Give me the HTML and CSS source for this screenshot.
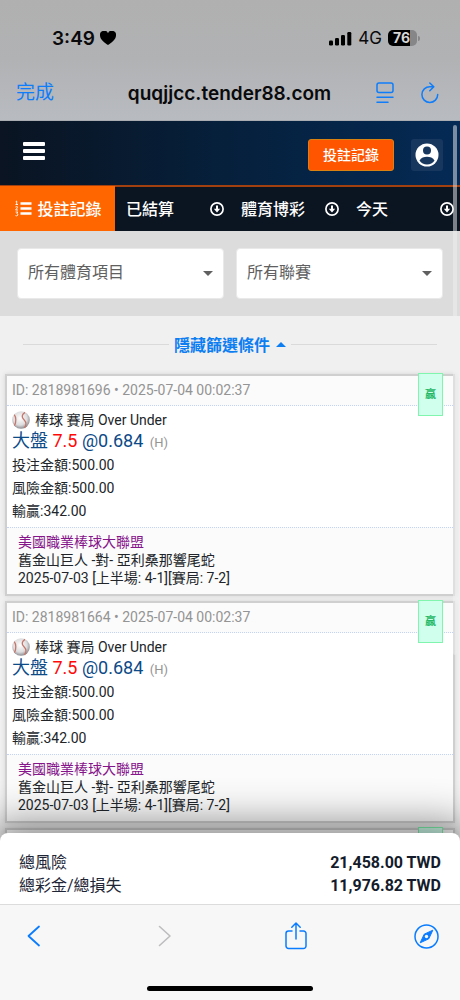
FILE: index.html
```html
<!DOCTYPE html>
<html lang="zh-Hant">
<head>
<meta charset="utf-8">
<meta name="viewport" content="width=device-width, initial-scale=1">
<title>投註記錄</title>
<link rel="stylesheet" href="styles.css">
</head>
<body>
<svg class="defs" aria-hidden="true">
  <defs>
    <radialGradient id="ball-fill" cx="45%" cy="40%" r="60%">
      <stop offset="0" stop-color="#fff"/><stop offset=".65" stop-color="#dcdcde"/><stop offset="1" stop-color="#8d8b90"/>
    </radialGradient>
    <symbol id="ball" viewBox="0 0 18 18">
      <circle cx="9" cy="9" r="8.8" fill="url(#ball-fill)"/>
      <path d="M2.2 3.6C4.2 6 4.4 11 2.4 14.6M13 1.4C9.600 3.500 9.300 6.500 12.200 9C14.600 11.300 14.400 14 12.600 16.800" fill="none" stroke="#c4766a" stroke-width="1.300"/>
    </symbol>
    <symbol id="down" viewBox="0 0 14 14">
      <circle cx="7" cy="7" r="6.100" fill="none" stroke="#fff" stroke-width="1.700"/>
      <path d="M6 3.500h2v3.300h2.200L7 10.400 3.800 6.800H6z" fill="#fff"/>
    </symbol>
  </defs>
</svg>

<header class="chrome">
  <div class="status">
    <div class="clock">3:49
      <svg width="16" height="14" viewBox="0 0 16 14"><path d="M8 14C5 12 0 8.600 0 4.500A4.200 4.200 0 0 1 8 2.200 4.200 4.200 0 0 1 16 4.500C16 8.600 11 12 8 14z"/></svg>
    </div>
    <div class="signals">
      <svg width="23" height="15" viewBox="0 0 23 15"><rect x="0" y="9.500" width="4" height="5" rx="1.200"/><rect x="6" y="7" width="4" height="7.500" rx="1.200"/><rect x="12" y="4" width="4" height="10.500" rx="1.200"/><rect x="18.300" y="1" width="4" height="13.500" rx="1.200"/></svg>
      <span class="net">4G</span>
      <span class="battery"><span class="level">76</span></span>
    </div>
  </div>
  <div class="address">
    <button class="done" type="button">完成</button>
    <span class="host">quqjjcc.tender88.com</span>
    <div class="tools">
      <button type="button" aria-label="閱讀器"><svg width="18" height="22" viewBox="0 0 18 22" fill="none" stroke="#0f7dfa" stroke-width="1.500" stroke-linecap="round"><rect x="1" y="1" width="16" height="9.500" rx="2"/><path d="M1 15.200h16M1 20.200h11"/></svg></button>
      <button type="button" aria-label="重新載入"><svg width="18" height="22" viewBox="0 0 18 22" fill="none" stroke="#0f7dfa" stroke-width="1.500" stroke-linecap="round" stroke-linejoin="round"><path d="M16.700 12.500A7.900 7.900 0 1 1 9 4.700h3.500M8.800 1l4 3.800-4 4"/></svg></button>
    </div>
  </div>
</header>

<div class="site">
  <div class="topbar">
    <button class="menu" type="button" aria-label="選單"><svg width="22" height="18" viewBox="0 0 22 18" fill="#fff"><rect width="22" height="4" rx="1"/><rect y="7" width="22" height="4" rx="1"/><rect y="14" width="22" height="4" rx="1"/></svg></button>
    <div class="account">
      <a class="records" href="#records">投註記錄</a>
      <button class="user" type="button" aria-label="帳戶"><svg width="24" height="24" viewBox="0 0 24 24"><circle cx="12" cy="12" r="11.500" fill="#fff"/><circle cx="12" cy="7.500" r="4" fill="#17375f"/><path d="M4.500 17.500C6 14.800 9 13.800 12 13.800s6 1 7.500 3.700C18 20 15 21.500 12 21.500S6 20 4.500 17.500z" fill="#17375f"/></svg></button>
    </div>
  </div>
  <nav class="tabs">
    <button class="tab active" type="button">
      <svg width="17" height="17" viewBox="0 0 17 17" fill="none" stroke="#fff"><path d="M5.500 3.500h11M5.500 8.500h11M5.500 13.500h11" stroke-width="2.400"/><path d="M.7 1.700l1-.7v3.500M.5 4.500h2.500M.5 7q2.500-1 2 .6L.6 10H3M.6 12h2.200l-1 1.500q2 .6.700 2-.8.700-2 .1" stroke-width=".9"/></svg>
      <span>投註記錄</span>
    </button>
    <button class="tab" type="button"><span>已結算</span><svg width="14" height="14"><use href="#down"/></svg></button>
    <button class="tab" type="button"><span>體育博彩</span><svg width="14" height="14"><use href="#down"/></svg></button>
    <button class="tab" type="button"><span>今天</span><svg width="14" height="14"><use href="#down"/></svg></button>
  </nav>
  <main class="content">
    <form class="filters">
      <label class="field"><select aria-label="體育項目"><option>所有體育項目</option></select></label>
      <label class="field"><select aria-label="聯賽"><option>所有聯賽</option></select></label>
    </form>
    <div class="toggle"><button type="button">隱藏篩選條件<i class="up"></i></button></div>
    <div class="bets" id="records">
      <article class="bet">
        <div class="id">ID: 2818981696 • 2025-07-04 00:02:37</div>
        <div class="detail">
          <div class="market"><svg width="18" height="18"><use href="#ball"/></svg>棒球 賽局 Over Under</div>
          <div class="pick">大盤 <b>7.5</b> @0.684 <small>(H)</small></div>
          <div class="amount">投注金額:500.00</div>
          <div class="amount">風險金額:500.00</div>
          <div class="amount">輸贏:342.00</div>
        </div>
        <div class="match">
          <div class="league">美國職業棒球大聯盟</div>
          <div>舊金山巨人 -對- 亞利桑那響尾蛇</div>
          <div>2025-07-03 [上半場: 4-1][賽局: 7-2]</div>
        </div>
        <span class="result">贏</span>
      </article>
      <article class="bet">
        <div class="id">ID: 2818981664 • 2025-07-04 00:02:37</div>
        <div class="detail">
          <div class="market"><svg width="18" height="18"><use href="#ball"/></svg>棒球 賽局 Over Under</div>
          <div class="pick">大盤 <b>7.5</b> @0.684 <small>(H)</small></div>
          <div class="amount">投注金額:500.00</div>
          <div class="amount">風險金額:500.00</div>
          <div class="amount">輸贏:342.00</div>
        </div>
        <div class="match">
          <div class="league">美國職業棒球大聯盟</div>
          <div>舊金山巨人 -對- 亞利桑那響尾蛇</div>
          <div>2025-07-03 [上半場: 4-1][賽局: 7-2]</div>
        </div>
        <span class="result">贏</span>
      </article>
      <article class="bet">
        <div class="id"></div>
        <span class="result"></span>
      </article>
    </div>
  </main>
  <span class="scrollbar"></span>
</div>

<section class="summary">
  <div class="total"><span>總風險</span><strong>21,458.00 TWD</strong></div>
  <div class="total"><span>總彩金/總損失</span><strong>11,976.82 TWD</strong></div>
</section>

<footer class="toolbar">
  <div class="actions">
    <button type="button" aria-label="上一頁"><svg width="14" height="22" viewBox="0 0 14 22" fill="none" stroke="#0a7cff" stroke-width="1.800" stroke-linecap="round" stroke-linejoin="round"><path d="M12 1.500L1.500 11 12 20.500"/></svg></button>
    <button type="button" aria-label="下一頁"><svg width="14" height="22" viewBox="0 0 14 22" fill="none" stroke="#bdbdbf" stroke-width="1.600" stroke-linecap="round" stroke-linejoin="round"><path d="M1.500 1.500L12 11 1.500 20.500"/></svg></button>
    <button type="button" aria-label="分享"><svg width="22" height="28" viewBox="0 0 22 28" fill="none" stroke="#0a7cff" stroke-width="1.500" stroke-linecap="round" stroke-linejoin="round"><path d="M7 9H3.500A2.500 2.500 0 0 0 1 11.500v12.500A2.500 2.500 0 0 0 3.500 26.500h15A2.500 2.500 0 0 0 21 24V11.500A2.500 2.500 0 0 0 18.500 9H15M11 17V1.200M6.800 5.200L11 1l4.200 4.200"/></svg></button>
    <button type="button" aria-label="瀏覽器"><svg width="25" height="25" viewBox="0 0 25 25"><circle cx="12.500" cy="12.500" r="11.500" fill="none" stroke="#0a7cff" stroke-width="1.500"/><path d="M18.800 6.200L14.800 14.800 6.200 18.800 10.200 10.200z" fill="#0a7cff" stroke="#0a7cff" stroke-linejoin="round"/><circle cx="12.500" cy="12.500" r="1.700" fill="#f7f7f7"/></svg></button>
  </div>
  <div class="home"></div>
</footer>
</body>
</html>
```
FILE: styles.css
```css
* { box-sizing: border-box; }

body {
  margin: 0;
  height: 100vh;
  display: flex;
  flex-direction: column;
  overflow: hidden;
  background: #f0f0f0;
  color: #212529;
  font-family: Roboto, "Noto Sans CJK TC", sans-serif;
  font-size: 14px;
}

button, select {
  font: inherit;
  color: inherit;
  background: none;
  border: 0;
  margin: 0;
  padding: 0;
}

svg { display: block; flex: none; }
.defs { position: absolute; width: 0; height: 0; }

.chrome {
  flex: none;
  padding-top: 24px;
  background: linear-gradient(#b0b0b0, #b1b2b4 50%, #b8bbc0);
  border-bottom: 1px solid #a9adb2;
  color: #0a0a0c;
  font-family: Inter, "Noto Sans CJK TC", sans-serif;
}
.status {
  display: flex;
  align-items: center;
  justify-content: space-between;
  height: 28px;
  padding: 0 43px 0 52px;
}
.clock {
  display: flex;
  align-items: center;
  gap: 5px;
  font-size: 19px;
  font-weight: 600;
}
.signals { display: flex; align-items: center; gap: 6px; }
.net { font-size: 17px; }
.battery {
  position: relative;
  width: 29px;
  height: 16px;
  border-radius: 5px;
  background: linear-gradient(90deg, #000 76%, #868688 76%);
}
.battery::after {
  content: "";
  position: absolute;
  left: 30px;
  top: 6px;
  width: 2px;
  height: 5px;
  border-radius: 0 2px 2px 0;
  background: #868688;
}
.level {
  display: block;
  padding-right: 2px;
  text-align: center;
  color: #d6d6d6;
  font-size: 14px;
  font-weight: 700;
  line-height: 16px;
}
.address {
  display: grid;
  grid-template-columns: 1fr auto 1fr;
  align-items: center;
  height: 68px;
  padding: 14px 21px 0 16px;
}
.done { justify-self: start; color: #0f7dfa; font-size: 19px; line-height: 26px; }
.host { padding-left: 4px; font-size: 19px; font-weight: 600; }
.tools { display: flex; justify-content: flex-end; gap: 27px; }

.site {
  position: relative;
  flex: 1;
  min-height: 0;
  display: flex;
  flex-direction: column;
}
.topbar {
  flex: none;
  display: flex;
  align-items: center;
  justify-content: space-between;
  height: 66px;
  padding: 4px 17px 0 23px;
  border-bottom: 2px solid #a3400f;
  background: linear-gradient(90deg, #0a1422, #06203c 50%, #042a55);
}
.menu { padding-bottom: 8px; }
.account { display: flex; align-items: center; gap: 17px; }
.records {
  padding: 0 14px;
  border: 1px solid #d98212;
  border-radius: 3px;
  background: #ff5500;
  color: #fff;
  font-weight: 500;
  line-height: 30px;
  text-decoration: none;
}
.user {
  display: grid;
  place-items: center;
  width: 32px;
  height: 32px;
  border-radius: 3px;
  background: #17375f;
}
.tabs {
  flex: none;
  display: grid;
  grid-template-columns: repeat(4, 1fr);
  height: 44px;
  background: #0b1421;
  color: #fff;
  font-size: 16px;
  font-weight: 500;
}
.tab {
  display: flex;
  align-items: center;
  justify-content: space-between;
  padding: 0 6px 0 11px;
}
.tab span { padding-bottom: 2px; }
.tab.active {
  justify-content: center;
  gap: 5px;
  padding: 0 0 0 2px;
  margin-top: -1px;
  background: #ff6600;
}

.content { flex: 1; min-height: 0; overflow: hidden; }
.filters {
  display: grid;
  grid-template-columns: 1fr 1fr;
  gap: 12px;
  padding: 17px;
  background: #dcdcdc;
}
.field { position: relative; }
.field select {
  appearance: none;
  display: block;
  width: 100%;
  height: 51px;
  padding: 0 32px 2px 10px;
  border: 1px solid #e9e9e9;
  border-radius: 4px;
  background: #fff;
  color: #606060;
  font-size: 16px;
}
.field::after {
  content: "";
  position: absolute;
  right: 11px;
  top: 23px;
  border: 5px solid transparent;
  border-top-color: #606060;
  border-bottom: 0;
}
.toggle {
  display: flex;
  align-items: center;
  gap: 5px;
  height: 58px;
  padding: 0 23px 2px;
}
.toggle::before, .toggle::after {
  content: "";
  flex: 1;
  border-top: 1px solid #dadada;
}
.toggle button {
  display: flex;
  align-items: center;
  gap: 6px;
  color: #0d7ef2;
  font-size: 16px;
  font-weight: 700;
}
.up {
  border: 5px solid transparent;
  border-bottom-color: #0d7ef2;
  border-top: 0;
}

.bets {
  display: grid;
  gap: 5px;
  padding: 0 5px;
}
.bet {
  position: relative;
  border: 2px solid #cfcfcf;
  background: #fff;
  box-shadow: 0 0 4px #d4d4d4;
}
.id {
  height: 30px;
  padding-left: 5px;
  border-bottom: 1px dotted #c3d3f5;
  background: #fbfbfb;
  color: #949494;
  line-height: 29px;
}
.detail { padding: 5px 5px 4px; }
.market {
  display: flex;
  align-items: center;
  gap: 5px;
  line-height: 18px;
}
.pick {
  color: #0c4a88;
  font-size: 18px;
  line-height: 23px;
}
.pick b { color: #ff0808; font-weight: 400; }
.pick small { margin-left: 2px; color: #949494; font-size: 13px; }
.amount { line-height: 23px; }
.match {
  padding: 5px 11px 7px;
  border-top: 1px dotted #c3d3f5;
  background: #fbfbfb;
  line-height: 18px;
}
.league { color: #86148a; }
.result {
  position: absolute;
  top: -3px;
  right: 10px;
  display: grid;
  place-items: center;
  width: 25px;
  height: 43px;
  padding-bottom: 3px;
  border: 1px solid #80f5ae;
  background: #d0ffee;
  color: #24b866;
  font-size: 11px;
  font-weight: 700;
}
.scrollbar {
  position: absolute;
  top: 4px;
  right: 3px;
  width: 4px;
  height: 530px;
  border-radius: 2px;
  background: rgb(240 240 240 / 50%);
}

.summary {
  position: relative;
  flex: none;
  margin-top: -8px;
  padding: 18px 19px 7px;
  border-radius: 8px 8px 0 0;
  background: #fff;
  box-shadow: 0 0 40px 10px rgb(0 0 0 / 45%);
  font-size: 16px;
  line-height: 23px;
}
.total { display: flex; justify-content: space-between; }
.total span { color: #1e2636; }
.total strong { color: #141c2b; font-weight: 700; }
.toolbar {
  position: relative;
  flex: none;
  padding: 17px 0 9px;
  border-top: 1px solid #dcdcdc;
  background: #f7f7f7;
}
.actions {
  display: grid;
  grid-template-columns: repeat(4, 131px);
  justify-content: center;
  justify-items: center;
  align-items: center;
  height: 28px;
}
.home {
  width: 36%;
  height: 5px;
  margin: 36px auto 0;
  border-radius: 3px;
  background: #000;
}
```
